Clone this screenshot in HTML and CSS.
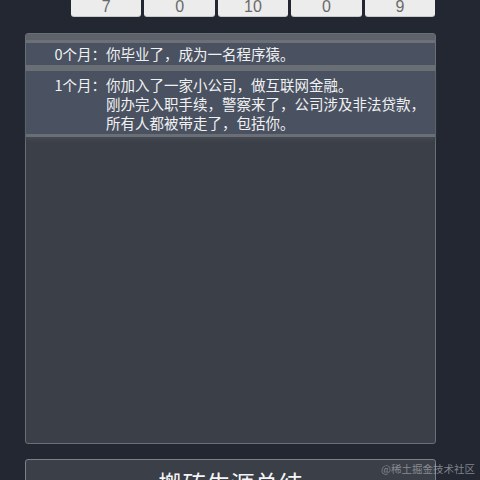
FILE: index.html
```html
<!DOCTYPE html>
<html lang="zh">
<head>
<meta charset="utf-8">
<link rel="stylesheet" href="styles.css">
</head>
<body>
<div class="stats">
  <div class="stat">7</div>
  <div class="stat">0</div>
  <div class="stat">10</div>
  <div class="stat">0</div>
  <div class="stat">9</div>
</div>
<div class="log">
  <div class="entry">
    <div class="label">0个月：</div>
    <div class="text">你毕业了，成为一名程序猿。</div>
  </div>
  <div class="entry">
    <div class="label">1个月：</div>
    <div class="text">你加入了一家小公司，做互联网金融。<br>刚办完入职手续，警察来了，公司涉及非法贷款，<br>所有人都被带走了，包括你。</div>
  </div>
</div>
<div class="summary">搬砖生涯总结</div>
<div class="watermark">@稀土掘金技术社区</div>
</body>
</html>
```
FILE: styles.css
```css
html, body {
  margin: 0;
  padding: 0;
  height: 480px;
  overflow: hidden;
  background: #222731;
}
body {
  position: relative;
  font-family: "Noto Sans CJK SC", "Noto Sans", sans-serif;
  color: #eceef0;
}
.stats {
  display: flex;
  gap: 3px;
  margin-left: 71px;
  width: 364px;
  height: 16px;
}
.stat {
  flex: 1;
  height: 16px;
  background: #ececec;
  border-radius: 0 0 3px 3px;
  color: #6a6a6a;
  font-family: "Liberation Sans", sans-serif;
  font-size: 16px;
  line-height: 13px;
  text-align: center;
  box-shadow: 0 1px 0 #c9c9c9;
}
.log {
  margin: 17px 0 0 25px;
  width: 409px;
  height: 409px;
  border: 1px solid #6a6e76;
  border-radius: 3px;
  background: #3b3f48;
}
.entry {
  display: flex;
  background: #4a5160;
  border-top: 3px solid #6a6e75;
  border-bottom: 3px solid #6a6e75;
  padding: 4px 0 2px;
  font-size: 14.5px;
  line-height: 19px;
  color: #f0f1f3;
}
.entry:first-child {
  border-top: 6px solid #5e626a;
  box-shadow: inset 0 3px 0 #6c7077;
}
.entry:last-child {
  box-shadow: 0 3px 3px rgba(70, 74, 82, 0.9);
}
.label {
  width: 80px;
  flex: none;
  text-align: right;
}
.text {
  flex: 1;
}
.summary {
  margin: 15px 0 0 25px;
  width: 409px;
  height: 60px;
  border: 1px solid #7c8088;
  border-radius: 3px;
  background: #3b3f48;
  text-align: center;
  font-size: 24px;
  line-height: 34px;
  padding-top: 6px;
  color: #f4f5f6;
}
.watermark {
  position: absolute;
  right: 5px;
  top: 461px;
  font-size: 10.5px;
  line-height: 16px;
  color: rgba(160, 164, 172, 0.75);
}
```
